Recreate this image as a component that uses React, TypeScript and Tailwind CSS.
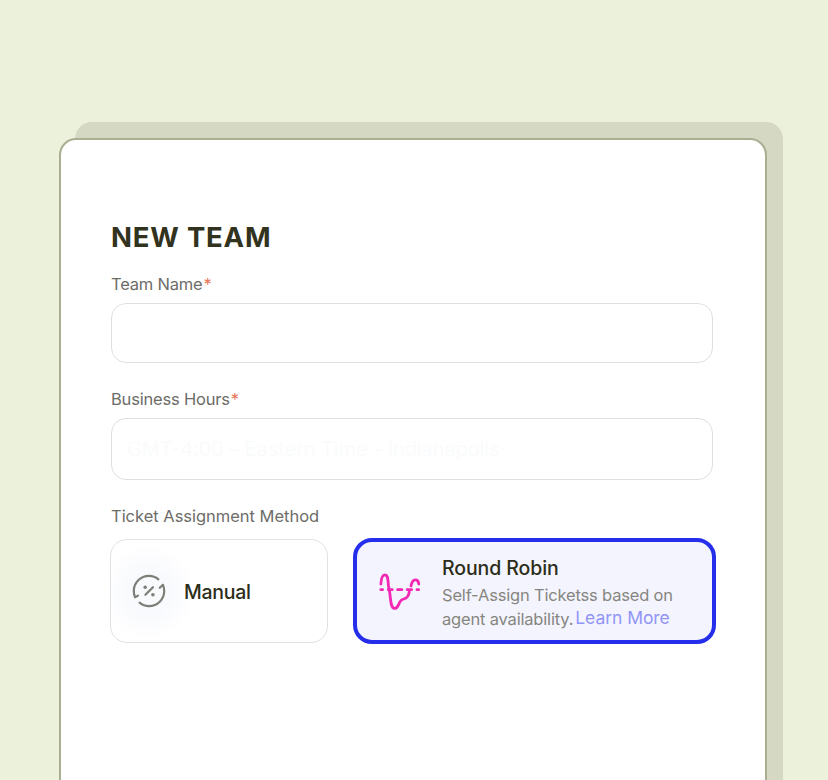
import React from 'react';

interface IconProps {
  className?: string;
}

interface FieldProps {
  label: string;
  className: string;
  placeholder?: string;
}

/**
 * Percent sign inside two chasing arrows
 */
function ManualIcon({ className = '' }: IconProps) {
  return (
    <svg
      width="36"
      height="36"
      viewBox="0 0 36 36"
      fill="none"
      stroke="#7e7e78"
      strokeWidth="2.2"
      strokeLinecap="round"
      strokeLinejoin="round"
      className={className}
    >
      <path d="M27.4 6.3C24.8 4.1 21.6 2.8 18 2.8C9.6 2.8 2.8 9.6 2.8 18C2.8 20.1 3.2 22.3 4.1 24.2L7 22.6" />
      <path d="M8.6 29.7C11.2 31.9 14.4 33.2 18 33.2C26.4 33.2 33.2 26.4 33.2 18C33.2 15.9 32.8 13.7 31.9 11.8L28.8 14.8" />
      <path d="M14.4 21.8L22 14.2" />
      <circle cx="14.2" cy="14.2" r="1.8" fill="#7e7e78" stroke="none" />
      <circle cx="21.9" cy="21.7" r="1.8" fill="#7e7e78" stroke="none" />
    </svg>
  );
}

/**
 * Wave crossing a dashed axis
 */
function WaveIcon({ className = '' }: IconProps) {
  return (
    <svg
      width="42"
      height="38"
      viewBox="0 0 42 38"
      fill="none"
      stroke="#f328b4"
      strokeWidth="2.8"
      strokeLinecap="round"
      strokeLinejoin="round"
      className={className}
    >
      <path d="M1.9 11C2.2 5.5 3 1.8 5.8 1.8C9.2 1.8 8.9 7.2 9.4 12.4L10.7 19.4C11.8 28 11.9 35.2 15.3 35.4C19.8 35.7 18.8 30.5 22.2 27.2C24.6 25 29.2 27.2 30.3 18.8" />
      <path d="M32 13C32.8 9 34.2 6.8 36.3 6.8C38.4 6.8 39.6 8.6 39.8 11" />
      <path d="M1.8 16.7H3.6M9.3 16.7H13.2M18.6 16.7H22.9M28.2 16.7H32.6M38 16.7H39.6" />
    </svg>
  );
}

/**
 * Required text field with its label
 */
function Field({ label, className, placeholder }: FieldProps) {
  return (
    <label className="block">
      <span className="flex h-[20px] items-center text-[16.5px] leading-[20px] tracking-[-0.2px] text-[#6d6d68]">
        {label}
        <span className="ml-px text-[#e8795a]">*</span>
      </span>
      <input
        type="text"
        placeholder={placeholder}
        className={`block w-[602px] rounded-[15px] border border-[#dfdfdf] bg-white px-[15px] text-[20px] tracking-[-0.1px] outline-none placeholder:text-[#fafbfc] ${className}`}
      />
    </label>
  );
}

export default function App() {
  return (
    <div className="h-[780px] w-[828px] overflow-hidden bg-[#ecf1db] pt-[138px] pl-[59px] font-['Inter',sans-serif]">
      <main className="h-[720px] w-[708px] rounded-[17px] border-2 border-[#abaf91] bg-white pt-[81px] pl-[50px] shadow-[16px_-16px_0_#d5d8c2]">
        <h1 className="h-[53px] text-[27.5px] leading-[32px] font-bold tracking-[0.8px] text-[#32331e]">
          NEW TEAM
        </h1>

        <Field label="Team Name" className="mt-[9px] h-[60px]" />
        <div className="mt-[26px]">
          <Field
            label="Business Hours"
            className="mt-[9px] h-[62px]"
            placeholder="GMT-4:00 – Eastern Time - Indianapolis"
          />
        </div>

        <h2 className="mt-[26px] h-[20px] text-[16.5px] leading-[20px] tracking-[-0.02px] text-[#6d6d68]">
          Ticket Assignment Method
        </h2>

        <div className="mt-[13px] -ml-px flex items-start gap-[25px]">
          <button
            type="button"
            className="flex h-[104px] w-[218px] items-center rounded-[17px] border border-[#e1e1e8] bg-[radial-gradient(circle_at_38px_52px,#f8f9fd_0px,#f9fafd_22px,#ffffff_48px)] pl-[20px] text-left"
          >
            <ManualIcon />
            <span className="ml-[17px] pt-[2px] text-[19.5px] leading-[24px] font-medium tracking-[-0.3px] text-[#2c2d18]">
              Manual
            </span>
          </button>

          {/* Selected method */}
          <div className="-mt-px flex h-[106px] w-[363px] rounded-[19px] border-4 border-[#242eeb] bg-[#f4f4fe] pl-[22px]">
            <WaveIcon className="mt-[31px] shrink-0" />
            <div className="ml-[21px] pt-[14px] whitespace-nowrap">
              <h3 className="text-[19.5px] leading-[24px] font-medium tracking-[-0.1px] text-[#2c2d18]">
                Round Robin
              </h3>
              <p className="mt-[3px] text-[16.5px] leading-[24px] tracking-[-0.18px] text-[#86867f]">
                <span className="block">Self-Assign Ticketss based on</span>
                <span className="flex">
                  <span>agent availability.</span>
                  <a href="#" className="-mt-px ml-[2px] text-[17.5px] tracking-[-0.05px] text-[#9195f7]">
                    Learn More
                  </a>
                </span>
              </p>
            </div>
          </div>
        </div>
      </main>
    </div>
  );
}
